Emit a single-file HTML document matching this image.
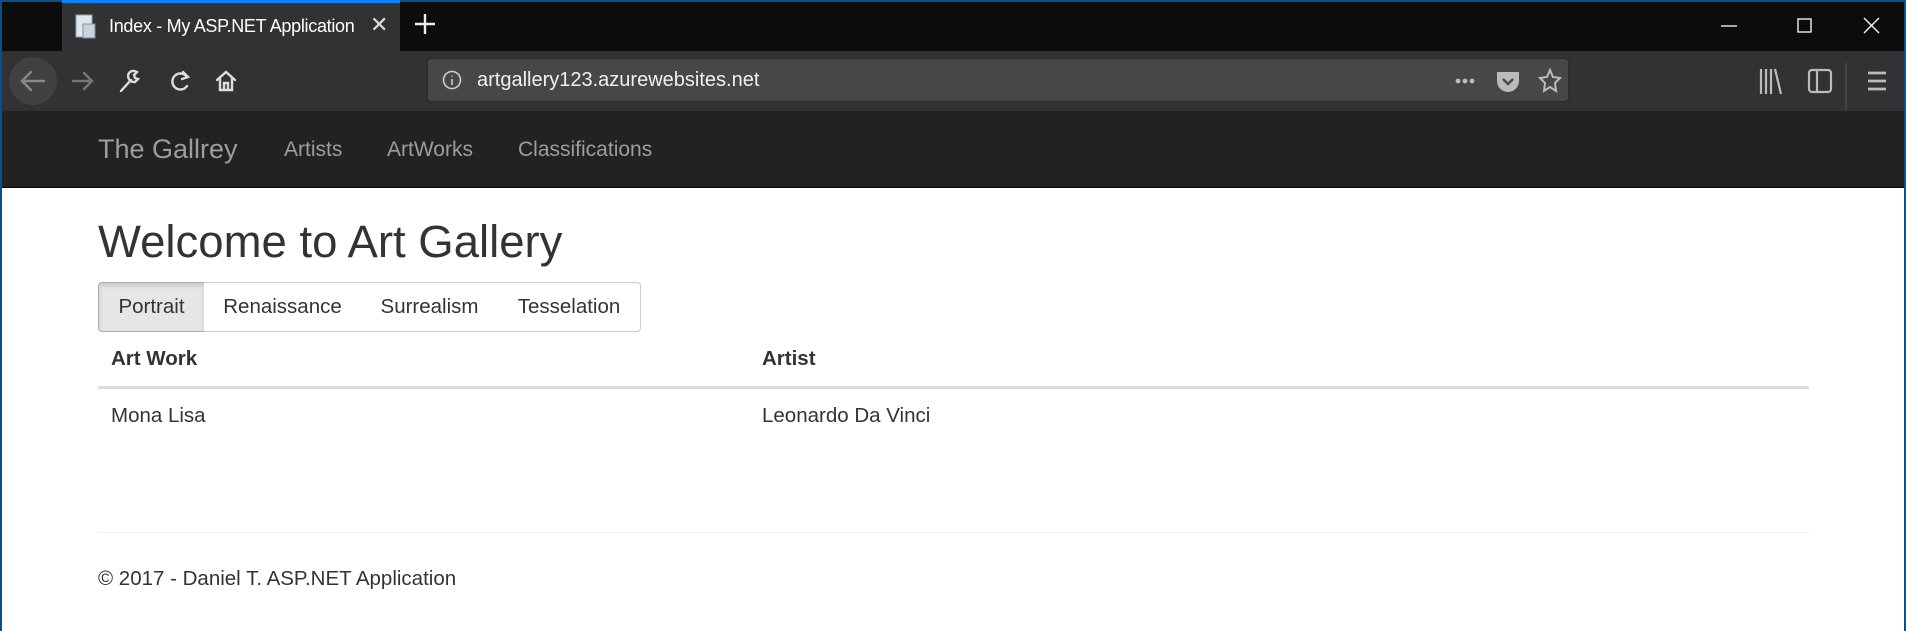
<!DOCTYPE html>
<html><head><meta charset="utf-8"><style>
*{margin:0;padding:0;box-sizing:border-box}
body{width:1906px;height:631px;overflow:hidden;background:#fff;font-family:"Liberation Sans",Arial,sans-serif;position:relative}
.abs{position:absolute}
#tabs{left:0;top:0;width:1906px;height:51px;background:#0c0c0c;border-top:2px solid #0b4f8a}
#tab{left:62px;top:0;width:338px;height:51px;background:#323234;border-top:3px solid #0a84ff}
#toolbar{left:0;top:51px;width:1906px;height:60px;background:#323234}
#url{left:427px;top:7px;width:1142px;height:44px;background:#474749;border-radius:4px;border:1px solid #2a2a2e}
#nav{left:0;top:111px;width:1906px;height:77px;background:#222;border-bottom:1px solid #080808}
.nl{color:#9d9d9d;font-size:21px;top:27px}
#lb{left:0;top:0;width:2px;height:631px;background:#0b4f8a}
#rb{right:0;top:0;width:2px;height:631px;background:#0b4f8a}
.btn{position:absolute;top:282px;height:50px;border:1px solid #ccc;font-size:20.5px;color:#333;line-height:48px;text-align:center;background:#fff}
.t{font-size:20.5px;color:#333}
</style></head><body>
<div id="tabs" class="abs"></div>
<div id="tab" class="abs">
 <svg class="abs" style="left:13px;top:11px" width="22" height="26" viewBox="0 0 22 26"><rect x="1" y="1" width="16" height="22" fill="#dfe6ee" stroke="#8aa" /><rect x="8" y="10" width="12" height="14" fill="#c8d4e0" stroke="#889"/></svg>
 <div class="abs" style="left:47px;top:13px;color:#fff;font-size:18px;white-space:nowrap;width:264px;overflow:hidden;letter-spacing:-0.3px">Index - My ASP.NET Application</div>
 <div class="abs" style="left:308px;top:9px;color:#ddd;font-size:22px">✕</div>
</div>
<svg class="abs" style="left:414px;top:13px" width="22" height="22"><path d="M11 1V21M1 11H21" stroke="#eee" stroke-width="2.4"/></svg>
<svg class="abs" style="left:1720px;top:14px" width="170" height="24" fill="none" stroke="#fff" stroke-width="1.3"><path d="M1 12H17"/><rect x="78" y="5" width="13" height="13"/><path d="M144 4L159 19M159 4L144 19"/></svg>
<div id="toolbar" class="abs">
 <svg class="abs" style="left:0;top:0" width="260" height="60" fill="none" stroke-linecap="round">
  <circle cx="33" cy="30" r="24" fill="#414143"/>
  <path d="M22 30H44M31 21L22 30L31 39" stroke="#888" stroke-width="2.4"/>
  <path d="M73 30H92M84 22L92 30L84 38" stroke="#777" stroke-width="2.4"/>
  <path d="M121 40L131 29M129 22a6 6 0 0 0 6 9l3-3-3-1-1-3 3-3a6 6 0 0 0-8 1z" stroke="#ddd" stroke-width="2.4"/>
  <path d="M187 26A8 8 0 1 0 187 35M183 21L188 26L182 28" stroke="#ddd" stroke-width="2.4"/>
  <path d="M217 29L226 21L235 29M220 27V39H232V27M224 39V32H228V39" stroke="#ddd" stroke-width="2.4"/>
 </svg>
 <div id="url" class="abs">
  <svg class="abs" style="left:14px;top:11px" width="20" height="20" fill="none" stroke="#ccc" stroke-width="1.6"><circle cx="10" cy="10" r="8.5"/><path d="M10 9V15M10 5.5V6.5"/></svg>
  <div class="abs" style="left:49px;top:10px;color:#f0f0f0;font-size:20px">artgallery123.azurewebsites.net</div>
  <svg class="abs" style="left:1025px;top:8px" width="110" height="28"><circle cx="5" cy="14" r="2.4" fill="#bbb"/><circle cx="12" cy="14" r="2.4" fill="#bbb"/><circle cx="19" cy="14" r="2.4" fill="#bbb"/><path d="M44 5H66V14A11 11 0 0 1 44 14Z" fill="#bbb"/><path d="M50 12L55 17L60 12" stroke="#474749" stroke-width="2.4" fill="none"/><path d="M97 3L100 10L107 11L102 16L103 24L97 20L91 24L92 16L87 11L94 10Z" stroke="#bbb" stroke-width="2" fill="none"/></svg>
 </div>
 <svg class="abs" style="left:1755px;top:0" width="151" height="60" fill="none" stroke="#bbb" stroke-width="2.2"><path d="M6 18V43M11 18V43M16 18V43M20 18L26 43"/><rect x="54" y="19" width="22" height="22" rx="3"/><path d="M62 19V41"/><path d="M91 12V72" stroke="#555" stroke-width="1"/><path d="M113 22H131M113 30H131M113 38H131" stroke-width="2.8"/></svg>
</div>
<div id="nav" class="abs">
 <div class="abs" style="left:98px;top:23px;color:#9d9d9d;font-size:27px">The Gallrey</div>
 <div class="abs nl" style="left:284px">Artists</div>
 <div class="abs nl" style="left:387px">ArtWorks</div>
 <div class="abs nl" style="left:518px">Classifications</div>
</div>
<div id="lb" class="abs"></div><div id="rb" class="abs"></div>
<div class="abs" style="left:98px;top:216px;font-size:45.5px;color:#333">Welcome to Art Gallery</div>
<div class="btn" style="left:98px;width:107px;background:#e6e6e6;border-color:#adadad;border-radius:4px 0 0 4px;box-shadow:inset 0 3px 5px rgba(0,0,0,.12)">Portrait</div>
<div class="btn" style="left:204px;width:158px;border-left:none">Renaissance</div>
<div class="btn" style="left:361px;width:138px;border-left:none">Surrealism</div>
<div class="btn" style="left:498px;width:143px;border-left:none;border-radius:0 4px 4px 0">Tesselation</div>
<div class="abs t" style="left:111px;top:347px;font-weight:bold">Art Work</div>
<div class="abs t" style="left:762px;top:347px;font-weight:bold">Artist</div>
<div class="abs" style="left:98px;top:386px;width:1711px;height:3px;background:#ddd"></div>
<div class="abs t" style="left:111px;top:404px">Mona Lisa</div>
<div class="abs t" style="left:762px;top:404px">Leonardo Da Vinci</div>
<div class="abs" style="left:98px;top:532px;width:1711px;height:1px;background:#eee"></div>
<div class="abs t" style="left:98px;top:567px">© 2017 - Daniel T. ASP.NET Application</div>
</body></html>
